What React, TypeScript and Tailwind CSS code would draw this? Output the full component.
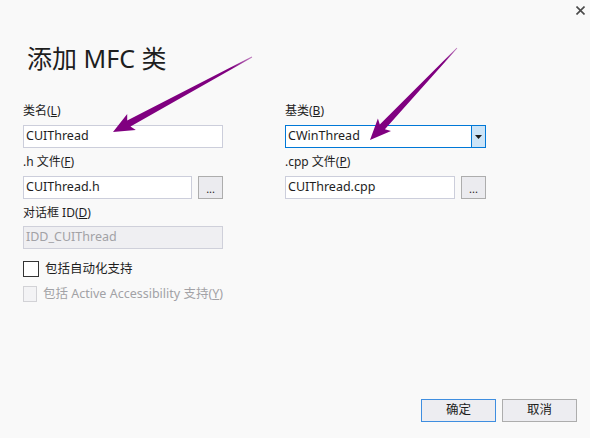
import React from "react";

function arrowPoly(tx: number, ty: number, px: number, py: number, headLen: number, headW: number, back: number, w0: number, w1: number) {
  const dx = px - tx, dy = py - ty;
  const L = Math.hypot(dx, dy);
  const ux = dx / L, uy = dy / L;
  const nx = -uy, ny = ux;
  const bx = px - ux * headLen, by = py - uy * headLen;
  const wx = px - ux * (headLen + back), wy = py - uy * (headLen + back);
  const pts: [number, number][] = [
    [tx + nx * w0, ty + ny * w0],
    [bx + nx * w1, by + ny * w1],
    [wx + nx * headW, wy + ny * headW],
    [px, py],
    [wx - nx * headW, wy - ny * headW],
    [bx - nx * w1, by - ny * w1],
    [tx - nx * w0, ty - ny * w0],
  ];
  return pts.map((p) => `${p[0].toFixed(1)},${p[1].toFixed(1)}`).join(" ");
}

function Label({ children, className = "h-[28px]" }: { children: React.ReactNode; className?: string }) {
  return <div className={`${className} flex items-center text-[12px] text-[#1e1e1e]`}>{children}</div>;
}

function TextBox({ value, w, disabled }: { value: string; w: string; disabled?: boolean }) {
  return (
    <div
      className={`${w} h-[23px] border flex items-center pl-[2px] text-[12.5px] ${
        disabled ? "bg-[#efeff2] border-[#cfd0da] text-[#a2a2a6]" : "bg-white border-[#cccedb] text-[#1e1e1e]"
      }`}
    >
      {value}
    </div>
  );
}

function Browse() {
  return (
    <div className="w-[25px] h-[23px] border border-[#adadad] bg-[#ebebef] flex items-center justify-center text-[11px] text-[#1e1e1e] leading-none pt-[2px]">
      ...
    </div>
  );
}

export default function App() {
  return (
    <div
      className="w-[590px] h-[438px] bg-[#f9f9f9] relative flex flex-col overflow-hidden"
      style={{ fontFamily: '"Noto Sans", "Noto Sans CJK SC", sans-serif' }}
    >
      <div className="h-[20px] flex justify-end pr-[5px] pt-[6px]">
        <svg width="9" height="9" viewBox="0 0 9 9">
          <path d="M0.5 0.5 L8.5 8.5 M8.5 0.5 L0.5 8.5" stroke="#4a4a4a" strokeWidth="1.6" />
        </svg>
      </div>
      <div className="mt-[22px] h-[32px] pl-[27px] text-[25px] leading-[32px] text-[#1e1e1e]">添加 MFC 类</div>
      <div className="mt-[23px] px-[23px] flex gap-[62px]">
        <div className="w-[200px] flex flex-col">
          <Label>
            类名(<u>L</u>)
          </Label>
          <TextBox value="CUIThread" w="w-[200px]" />
          <Label>
            .h 文件(<u>F</u>)
          </Label>
          <div className="flex gap-[6px]">
            <TextBox value="CUIThread.h" w="w-[170px]" />
            <Browse />
          </div>
          <Label className="h-[27px]">
            对话框 ID(<u>D</u>)
          </Label>
          <TextBox value="IDD_CUIThread" w="w-[200px]" disabled />
          <div className="mt-[12px] flex items-center gap-[6px] h-[16px]">
            <div className="w-[16px] h-[16px] border border-[#333] bg-white" />
            <span className="text-[12.5px] text-[#1e1e1e]">包括自动化支持</span>
          </div>
          <div className="mt-[9px] flex items-center gap-[6px] h-[16px] whitespace-nowrap">
            <div className="w-[16px] h-[16px] border border-[#d2d2d6] bg-[#f3f3f5]" />
            <span className="text-[12.5px] text-[#a2a2a6]">
              包括 Active Accessibility 支持(<u>Y</u>)
            </span>
          </div>
        </div>
        <div className="w-[201px] flex flex-col">
          <Label>
            基类(<u>B</u>)
          </Label>
          <div className="w-[201px] h-[23px] border border-[#0078d7] bg-white flex">
            <div className="flex-1 flex items-center pl-[2px] text-[12.5px] text-[#1e1e1e]">CWinThread</div>
            <div className="w-[14px] border-l border-[#0078d7] bg-[#cce4f7] flex items-center justify-center">
              <svg width="7" height="4" viewBox="0 0 7 4">
                <path d="M0 0 H7 L3.5 4 Z" fill="#1e1e1e" />
              </svg>
            </div>
          </div>
          <Label>
            .cpp 文件(<u>P</u>)
          </Label>
          <div className="flex gap-[6px]">
            <TextBox value="CUIThread.cpp" w="w-[170px]" />
            <Browse />
          </div>
        </div>
      </div>
      <div className="mt-auto pb-[16px] pr-[13px] flex justify-end gap-[6px]">
        <button className="w-[75px] h-[23px] border border-[#3f8ee0] bg-[#ededf1] text-[12.5px] text-[#1e1e1e] flex items-center justify-center">
          确定
        </button>
        <button className="w-[75px] h-[23px] border border-[#adadad] bg-[#ededf1] text-[12.5px] text-[#1e1e1e] flex items-center justify-center">
          取消
        </button>
      </div>
      <svg className="absolute inset-0 pointer-events-none" width="590" height="438" viewBox="0 0 590 438">
        <defs>
          <linearGradient id="g1" x1="252" y1="57" x2="113" y2="132" gradientUnits="userSpaceOnUse">
            <stop offset="0" stopColor="#c080c0" />
            <stop offset="0.15" stopColor="#800080" />
            <stop offset="1" stopColor="#800080" />
          </linearGradient>
          <linearGradient id="g2" x1="457" y1="48" x2="370" y2="140" gradientUnits="userSpaceOnUse">
            <stop offset="0" stopColor="#c080c0" />
            <stop offset="0.15" stopColor="#800080" />
            <stop offset="1" stopColor="#800080" />
          </linearGradient>
        </defs>
        <polygon points={arrowPoly(252, 57, 113, 132, 18, 9, 3, 0.4, 3.5)} fill="url(#g1)" />
        <polygon points={arrowPoly(457, 48, 370, 140, 18, 9, 3, 0.4, 3.5)} fill="url(#g2)" />
      </svg>
    </div>
  );
}
